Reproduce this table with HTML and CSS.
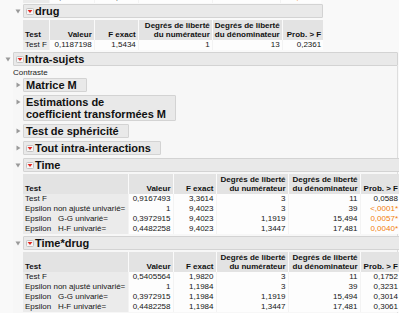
FILE: index.html
```html
<!DOCTYPE html>
<html lang="fr">
<head>
<meta charset="utf-8">
<title>Rapport multivarié</title>
<link rel="stylesheet" href="styles.css">
</head>
<body>
<div class="page">
  <div class="nest">
    <div class="prev">
      <table class="tbl small">
        <colgroup><col class="s1"><col class="s2"><col class="s3"><col class="s4"><col class="s5"><col class="s6"></colgroup>
        <tr><td>Test F</td><td>0,1187198</td><td>99,0000</td><td>1</td><td>13</td><td class="sig">&lt;,0001*</td></tr>
      </table>
    </div>

    <div class="outline">
      <span class="tri"><svg width="6" height="5" viewBox="0 0 6 5"><polygon points="0.5,0.5 5.5,0.5 3,4.5" fill="#9a9a9a"/></svg></span>
      <div class="bar"><svg class="menu" width="8" height="7" viewBox="0 0 8 7"><rect x="0.5" y="0.5" width="7" height="6" rx="1" fill="#f6f6f6" stroke="#c2c2c2"/><polygon points="1.6,2.1 6.4,2.1 4,5" fill="#e3261f"/></svg>drug</div>
      <div class="body">
        <table class="tbl small">
          <colgroup><col class="s1"><col class="s2"><col class="s3"><col class="s4"><col class="s5"><col class="s6"></colgroup>
          <tr><th>Test</th><th>Valeur</th><th>F exact</th><th>Degrés de liberté<br>du numérateur</th><th>Degrés de liberté<br>du dénominateur</th><th>Prob. &gt; F</th></tr>
          <tr><td>Test F</td><td>0,1187198</td><td>1,5434</td><td>1</td><td>13</td><td>0,2361</td></tr>
        </table>
      </div>
    </div>
  </div>

  <div class="outline wide">
    <span class="tri"><svg width="6" height="5" viewBox="0 0 6 5"><polygon points="0.5,0.5 5.5,0.5 3,4.5" fill="#9a9a9a"/></svg></span>
    <div class="bar"><svg class="menu" width="8" height="7" viewBox="0 0 8 7"><rect x="0.5" y="0.5" width="7" height="6" rx="1" fill="#f6f6f6" stroke="#c2c2c2"/><polygon points="1.6,2.1 6.4,2.1 4,5" fill="#e3261f"/></svg>Intra-sujets</div>
    <div class="body region">
      <div class="label">Contraste</div>

      <div class="outline closed">
        <span class="tri"><svg width="5" height="6" viewBox="0 0 5 6"><polygon points="0.5,0.5 4.5,3 0.5,5.5" fill="#9a9a9a"/></svg></span>
        <div class="bar plain">Matrice M</div>
      </div>

      <div class="outline closed">
        <span class="tri"><svg width="5" height="6" viewBox="0 0 5 6"><polygon points="0.5,0.5 4.5,3 0.5,5.5" fill="#9a9a9a"/></svg></span>
        <div class="bar plain">Estimations de<br>coefficient transformées M</div>
      </div>

      <div class="outline closed">
        <span class="tri"><svg width="5" height="6" viewBox="0 0 5 6"><polygon points="0.5,0.5 4.5,3 0.5,5.5" fill="#9a9a9a"/></svg></span>
        <div class="bar plain">Test de sphéricité</div>
      </div>

      <div class="outline closed">
        <span class="tri"><svg width="5" height="6" viewBox="0 0 5 6"><polygon points="0.5,0.5 4.5,3 0.5,5.5" fill="#9a9a9a"/></svg></span>
        <div class="bar"><svg class="menu" width="8" height="7" viewBox="0 0 8 7"><rect x="0.5" y="0.5" width="7" height="6" rx="1" fill="#f6f6f6" stroke="#c2c2c2"/><polygon points="1.6,2.1 6.4,2.1 4,5" fill="#e3261f"/></svg>Tout intra-interactions</div>
      </div>

      <div class="outline">
        <span class="tri"><svg width="6" height="5" viewBox="0 0 6 5"><polygon points="0.5,0.5 5.5,0.5 3,4.5" fill="#9a9a9a"/></svg></span>
        <div class="bar"><svg class="menu" width="8" height="7" viewBox="0 0 8 7"><rect x="0.5" y="0.5" width="7" height="6" rx="1" fill="#f6f6f6" stroke="#c2c2c2"/><polygon points="1.6,2.1 6.4,2.1 4,5" fill="#e3261f"/></svg>Time</div>
        <div class="body">
          <table class="tbl big">
            <colgroup><col class="b1"><col class="b2"><col class="b3"><col class="b4"><col class="b5"><col class="b6"></colgroup>
            <tr><th>Test</th><th>Valeur</th><th>F exact</th><th>Degrés de liberté<br>du numérateur</th><th>Degrés de liberté<br>du dénominateur</th><th>Prob. &gt; F</th></tr>
            <tr><td>Test F</td><td>0,9167493</td><td>3,3614</td><td>3</td><td>11</td><td>0,0588</td></tr>
            <tr><td>Epsilon non ajusté univarié=</td><td>1</td><td>9,4023</td><td>3</td><td>39</td><td class="sig">&lt;,0001*</td></tr>
            <tr><td>Epsilon   G-G univarié=</td><td>0,3972915</td><td>9,4023</td><td>1,1919</td><td>15,494</td><td class="sig">0,0057*</td></tr>
            <tr><td>Epsilon   H-F univarié=</td><td>0,4482258</td><td>9,4023</td><td>1,3447</td><td>17,481</td><td class="sig">0,0040*</td></tr>
          </table>
        </div>
      </div>

      <div class="outline">
        <span class="tri"><svg width="6" height="5" viewBox="0 0 6 5"><polygon points="0.5,0.5 5.5,0.5 3,4.5" fill="#9a9a9a"/></svg></span>
        <div class="bar"><svg class="menu" width="8" height="7" viewBox="0 0 8 7"><rect x="0.5" y="0.5" width="7" height="6" rx="1" fill="#f6f6f6" stroke="#c2c2c2"/><polygon points="1.6,2.1 6.4,2.1 4,5" fill="#e3261f"/></svg>Time*drug</div>
        <div class="body">
          <table class="tbl big">
            <colgroup><col class="b1"><col class="b2"><col class="b3"><col class="b4"><col class="b5"><col class="b6"></colgroup>
            <tr><th>Test</th><th>Valeur</th><th>F exact</th><th>Degrés de liberté<br>du numérateur</th><th>Degrés de liberté<br>du dénominateur</th><th>Prob. &gt; F</th></tr>
            <tr><td>Test F</td><td>0,5405564</td><td>1,9820</td><td>3</td><td>11</td><td>0,1752</td></tr>
            <tr><td>Epsilon non ajusté univarié=</td><td>1</td><td>1,1984</td><td>3</td><td>39</td><td>0,3231</td></tr>
            <tr><td>Epsilon   G-G univarié=</td><td>0,3972915</td><td>1,1984</td><td>1,1919</td><td>15,494</td><td>0,3014</td></tr>
            <tr><td>Epsilon   H-F univarié=</td><td>0,4482258</td><td>1,1984</td><td>1,3447</td><td>17,481</td><td>0,3061</td></tr>
          </table>
        </div>
      </div>
    </div>
  </div>
</div>
</body>
</html>
```

FILE: styles.css
```css
* { box-sizing: border-box; }

html, body {
  margin: 0;
  padding: 0;
}

body {
  width: 399px;
  height: 313px;
  overflow: hidden;
  background: #f9f9f9;
  color: #161616;
  font-family: "Liberation Sans", Arial, Helvetica, sans-serif;
}

.page {
  padding-left: 3px;
}

/* child of an outline above the visible area */
.nest {
  padding-left: 10px;
}

.prev {
  margin-top: -7px;
  padding-left: 10px;
  height: 10px;
  overflow: hidden;
}

/* outline node: disclosure triangle + title bar, body under the bar */
.outline {
  display: grid;
  grid-template-columns: 10px max-content;
  align-items: start;
  margin-top: 1px;
  margin-bottom: 2px;
}

.outline.wide {
  grid-template-columns: 10px 385px;
  margin-top: 0;
}

.outline.closed {
  margin-top: 0;
  margin-bottom: 3px;
}

.tri {
  grid-column: 1;
  grid-row: 1;
  height: 14px;
  display: flex;
  align-items: center;
  justify-content: center;
}

.tri svg { display: block; }

.bar {
  grid-column: 2;
  grid-row: 1;
  display: flex;
  align-items: center;
  min-height: 14px;
  padding: 0 9px 0 2px;
  background: #e9e9e9;
  border: 1px solid #d3d3d3;
  border-radius: 1px;
  font-size: 11px;
  line-height: 12px;
  font-weight: bold;
  color: #111;
  white-space: nowrap;
}

.bar.plain {
  padding-left: 2px;
}

.menu {
  display: block;
  flex: none;
  margin-right: 1px;
}

.body {
  grid-column: 2;
  grid-row: 2;
}

.region {
  background: #f7f7f7;
  border-right: 1px solid #dedede;
}

.label {
  margin-top: 2px;
  height: 10px;
  font-size: 8px;
  line-height: 10px;
  color: #222;
}

/* report tables */
.tbl {
  border-collapse: collapse;
  table-layout: fixed;
  font-size: 8px;
  margin-top: 2px;
}

.prev .tbl { margin-top: 0; }

.tbl th {
  background: #e3e3e3;
  font-weight: bold;
  text-align: right;
  vertical-align: bottom;
  line-height: 9px;
  padding: 1px 2px 1px 2px;
  border-left: 1px solid #fafafa;
  white-space: nowrap;
  color: #111;
}

.tbl th:first-child {
  text-align: left;
  border-left: 0;
}

.tbl td {
  background: #fdfdfd;
  text-align: right;
  line-height: 10px;
  height: 10px;
  padding: 0 2px;
  border-left: 1px solid #f3f3f3;
  white-space: pre;
  overflow: hidden;
}

.tbl td:first-child {
  text-align: left;
  background: #ebebeb;
  border-left: 0;
}

.sig { color: #f27d0c; }

.s1 { width: 25px; }
.s2 { width: 45px; }
.s3 { width: 44px; }
.s4 { width: 74px; }
.s5 { width: 68px; }
.s6 { width: 41px; }

.b1 { width: 105px; }
.b2 { width: 45px; }
.b3 { width: 43px; }
.b4 { width: 72px; }
.b5 { width: 72px; }
.b6 { width: 40px; }
```
